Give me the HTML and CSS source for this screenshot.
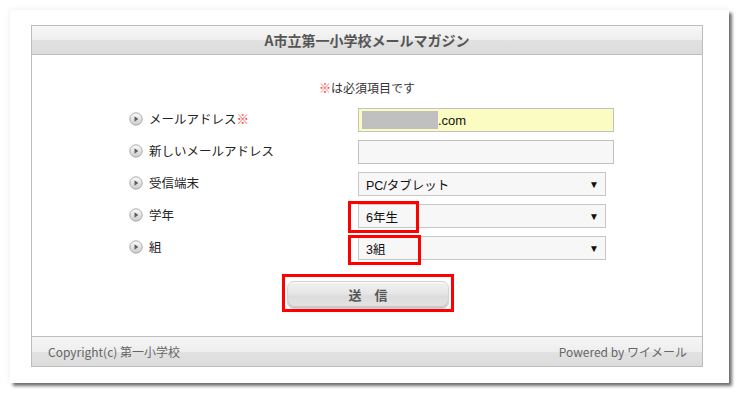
FILE: index.html
```html
<!DOCTYPE html>
<html lang="ja">
<head>
<meta charset="utf-8">
<title>A市立第一小学校メールマガジン</title>
<link rel="stylesheet" href="styles.css">
</head>
<body>
<div class="card">
  <div class="panel">
    <div class="panel-head">A市立第一小学校メールマガジン</div>
    <div class="panel-body">
      <p class="note"><span class="req">※</span>は必須項目です</p>
      <div class="form">
        <div class="label"><svg class="bullet" viewBox="0 0 14 14"><defs><linearGradient id="g" x1="0" y1="0" x2="0" y2="1"><stop offset="0" stop-color="#fdfdfd"/><stop offset="1" stop-color="#cacaca"/></linearGradient></defs><circle cx="7" cy="7" r="6.2" fill="url(#g)" stroke="#a9a9a9" stroke-width="1"/><path d="M5.5 4.2 L9.3 7 L5.5 9.8 Z" fill="#5e5e5e"/></svg><span>メールアドレス<span class="req">※</span></span></div>
        <div class="field"><div class="input filled"><span class="mask"></span>.com</div></div>

        <div class="label"><svg class="bullet" viewBox="0 0 14 14"><circle cx="7" cy="7" r="6.2" fill="url(#g)" stroke="#a9a9a9" stroke-width="1"/><path d="M5.5 4.2 L9.3 7 L5.5 9.8 Z" fill="#5e5e5e"/></svg><span>新しいメールアドレス</span></div>
        <div class="field"><div class="input"></div></div>

        <div class="label"><svg class="bullet" viewBox="0 0 14 14"><circle cx="7" cy="7" r="6.2" fill="url(#g)" stroke="#a9a9a9" stroke-width="1"/><path d="M5.5 4.2 L9.3 7 L5.5 9.8 Z" fill="#5e5e5e"/></svg><span>受信端末</span></div>
        <div class="field"><div class="select">PC/タブレット<span class="caret">▼</span></div></div>

        <div class="label"><svg class="bullet" viewBox="0 0 14 14"><circle cx="7" cy="7" r="6.2" fill="url(#g)" stroke="#a9a9a9" stroke-width="1"/><path d="M5.5 4.2 L9.3 7 L5.5 9.8 Z" fill="#5e5e5e"/></svg><span>学年</span></div>
        <div class="field"><div class="select">6年生<span class="caret">▼</span><span class="mark mark-grade"></span></div></div>

        <div class="label"><svg class="bullet" viewBox="0 0 14 14"><circle cx="7" cy="7" r="6.2" fill="url(#g)" stroke="#a9a9a9" stroke-width="1"/><path d="M5.5 4.2 L9.3 7 L5.5 9.8 Z" fill="#5e5e5e"/></svg><span>組</span></div>
        <div class="field"><div class="select">3組<span class="caret">▼</span><span class="mark mark-class"></span></div></div>
      </div>
      <div class="submit-row">
        <div class="submit-mark"><button class="submit" type="button">送　信</button></div>
      </div>
    </div>
    <div class="panel-foot">
      <span>Copyright(c) 第一小学校</span>
      <span>Powered by ワイメール</span>
    </div>
  </div>
</div>
</body>
</html>
```
FILE: styles.css
```css
* { box-sizing: border-box; }
html, body { margin: 0; padding: 0; background: #fff; }
body {
  font-family: "Noto Sans CJK JP", "Noto Sans", sans-serif;
  color: #222;
  width: 740px;
  height: 393px;
  overflow: hidden;
}
.card {
  margin: 10px 0 0 10px;
  width: 719px;
  height: 373px;
  background: #fff;
  padding: 15px 0 0 21px;
  box-shadow: 3px 3px 3px rgba(0,0,0,0.55), 0 0 6px rgba(0,0,0,0.08);
}
.panel {
  width: 672px;
  border: 1px solid #bdbdbd;
  background: #fff;
}
.panel-head {
  height: 29px;
  border-bottom: 1px solid #bdbdbd;
  background: linear-gradient(#f7f7f7 0, #eeeeee 50%, #e1e1e1 51%, #dcdcdc 100%);
  text-align: center;
  font-size: 14px;
  font-weight: bold;
  color: #555;
  line-height: 28px;
}
.panel-body {
  height: 281px;
  padding-top: 25px;
}
.note {
  margin: 0 0 12px;
  text-align: center;
  font-size: 12px;
  line-height: 16px;
  color: #333;
}
.req { color: #f33; }
.form {
  display: grid;
  grid-template-columns: 229px 1fr;
  row-gap: 8px;
  padding-left: 97px;
}
.label {
  display: flex;
  align-items: center;
  gap: 6px;
  height: 24px;
  padding-bottom: 3px;
  font-size: 12.5px;
  color: #222;
}
.bullet { width: 14px; height: 14px; flex: none; }
.field { height: 24px; }
.input {
  width: 256px;
  height: 24px;
  border: 1px solid #c2c2c2;
  background: #f7f7f7;
  display: flex;
  align-items: center;
  padding-left: 3px;
  font-family: "Liberation Sans", Arial, sans-serif;
  font-size: 13px;
  color: #111;
}
.input.filled { background: #fafcc2; }
.mask {
  display: inline-block;
  width: 76px;
  height: 18px;
  background: #c0c0c0;
}
.select {
  position: relative;
  width: 248px;
  height: 24px;
  border: 1px solid #c6c6c6;
  background: #f7f7f7;
  display: flex;
  align-items: center;
  padding-left: 7px;
  font-family: "Liberation Sans", "Noto Sans CJK JP", sans-serif;
  font-size: 12.5px;
  color: #111;
}
.caret {
  margin-left: auto;
  margin-right: 6px;
  font-size: 10px;
  color: #111;
}
.mark {
  position: absolute;
  border: 3px solid #f00;
}
.mark-grade { left: -11px; top: -4px; width: 71px; height: 32px; }
.mark-class { left: -11px; top: -2px; width: 73px; height: 30px; }
.submit-row {
  display: flex;
  justify-content: center;
  margin-top: 14px;
  padding-left: 2px;
}
.submit-mark {
  border: 3px solid #f00;
  width: 172px;
  height: 38px;
  padding: 4px 2px 0;
}
.submit {
  display: block;
  width: 100%;
  height: 28px;
  border: 1px solid #d3d3d3;
  border-radius: 7px;
  background: linear-gradient(#f1f1f1 0, #e6e6e6 45%, #dcdcdc 55%, #e4e4e4 100%);
  box-shadow: inset 0 -2px 0 #c8c8c8, inset 0 1px 0 #fafafa;
  font-family: "Noto Sans CJK JP", sans-serif;
  font-size: 13px;
  font-weight: bold;
  color: #555;
  padding: 0 0 2px;
}
.panel-foot {
  height: 30px;
  border-top: 1px solid #bdbdbd;
  background: linear-gradient(#f5f5f5 0, #eeeeee 50%, #e2e2e2 51%, #dcdcdc 100%);
  display: flex;
  justify-content: space-between;
  align-items: center;
  padding: 0 15px 1px 16px;
  font-size: 12px;
  color: #666;
}
```
